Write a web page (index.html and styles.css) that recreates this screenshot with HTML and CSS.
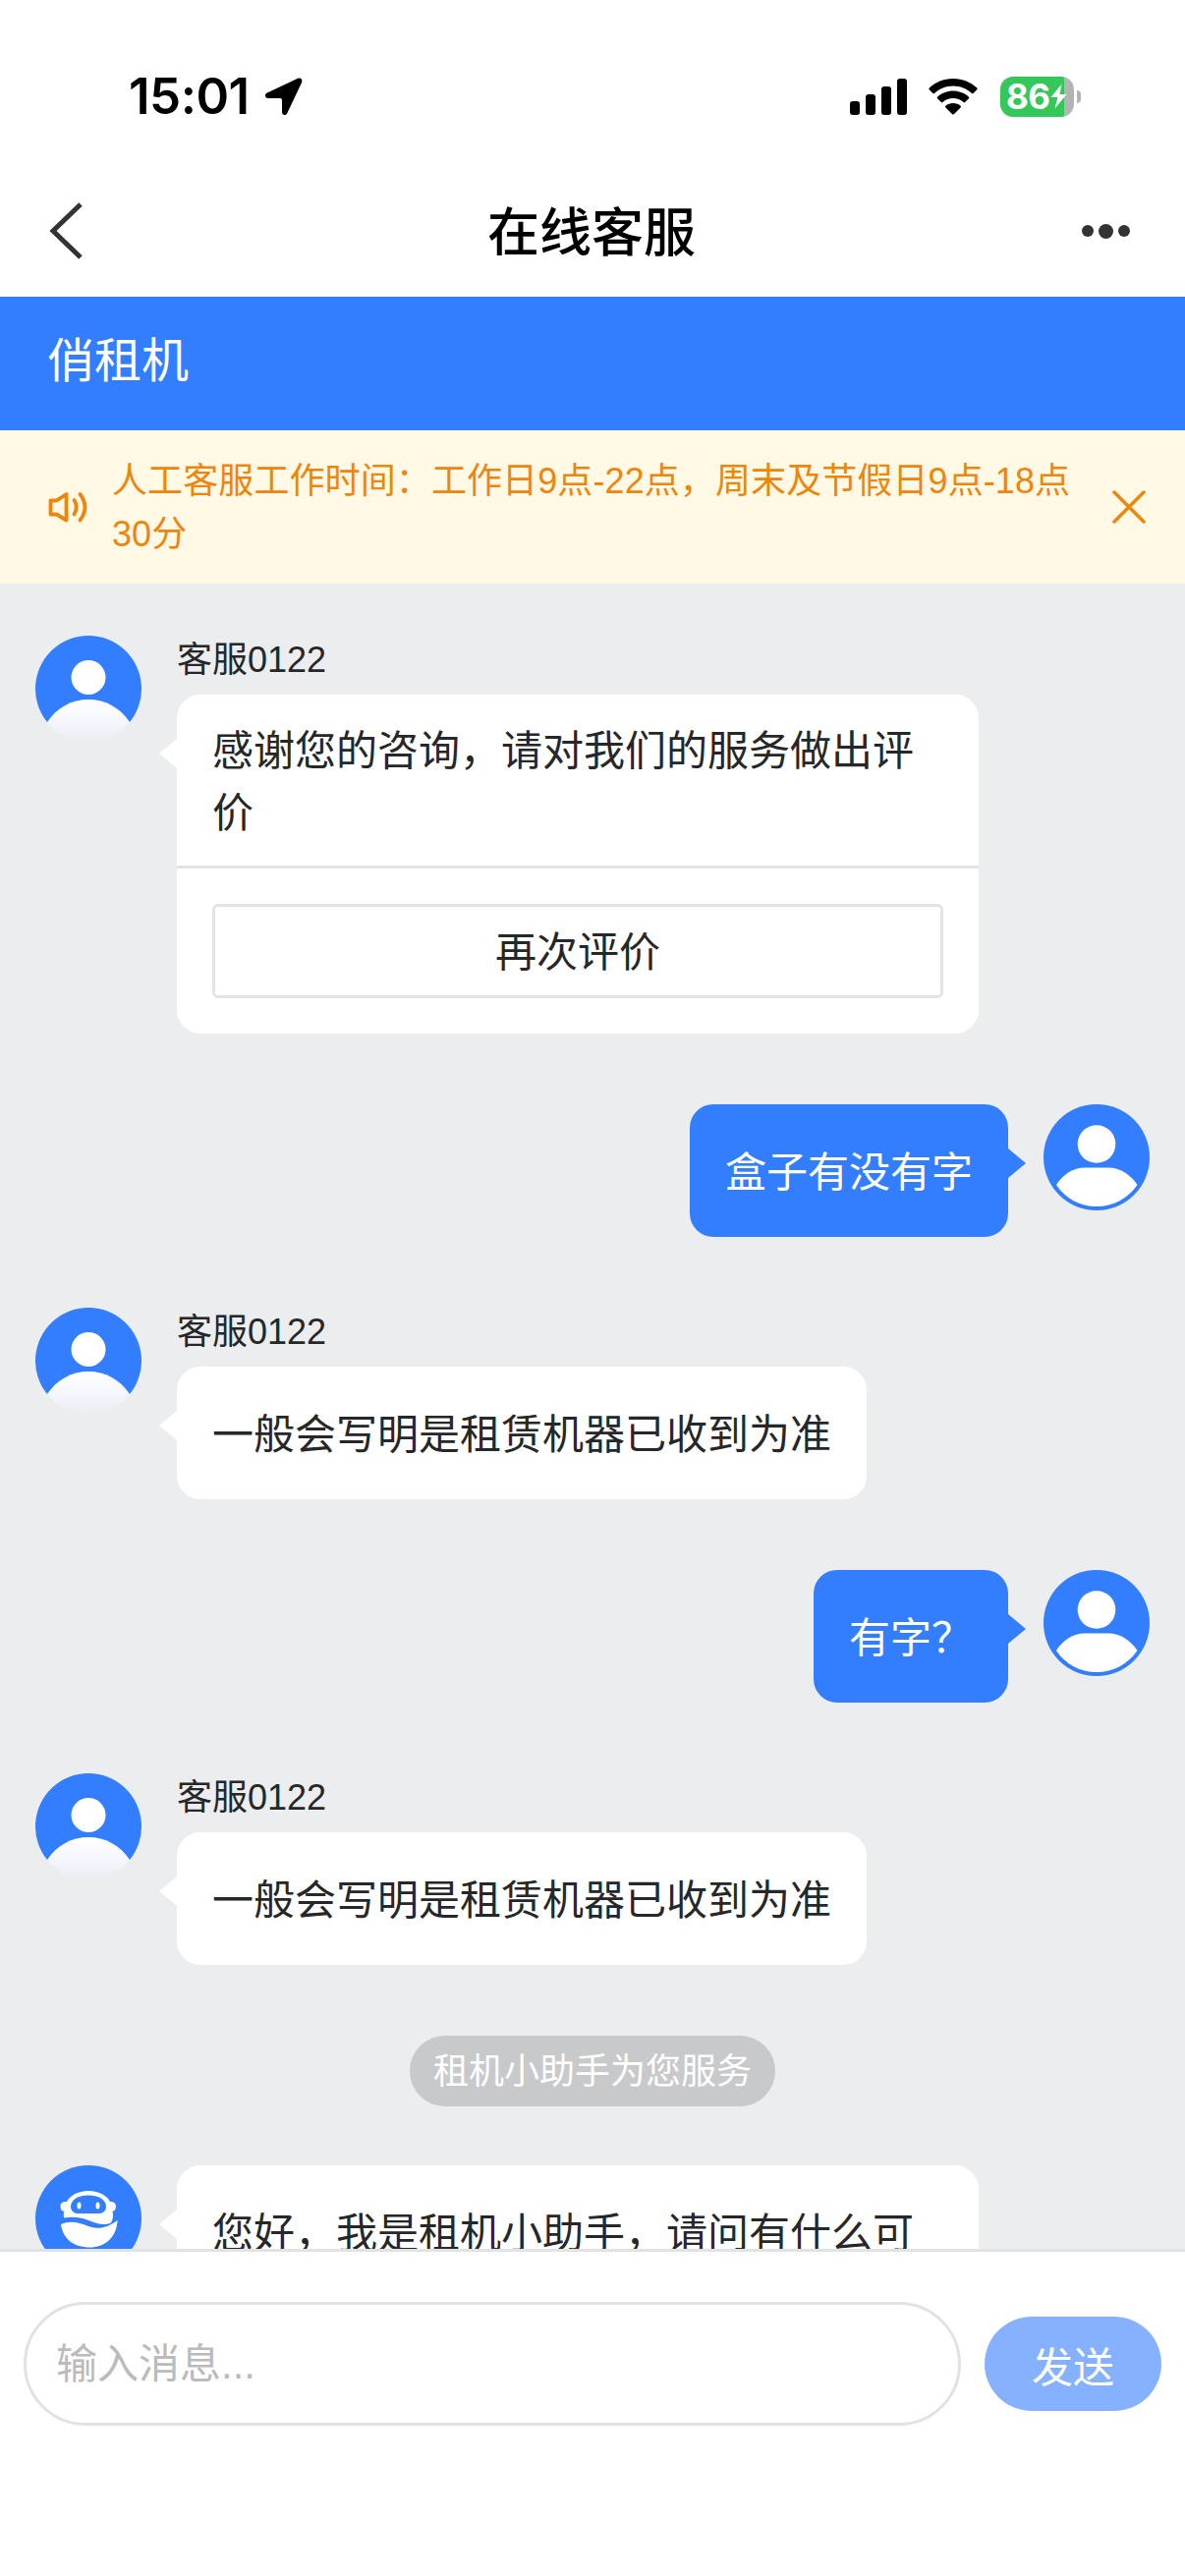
FILE: index.html
```html
<!DOCTYPE html>
<html lang="zh-CN">

<head>
    <meta charset="UTF-8" />
    <meta name="viewport" content="width=device-width, initial-scale=1.0" />
    <title>在线客服</title>
    <link rel="stylesheet" href="styles.css">
</head>

<body>
    <!-- 公用图标 -->
    <svg class="defs" width="0" height="0">
        <defs>
            <linearGradient id="fade" x1="0" y1="0" x2="0" y2="1">
                <stop offset="0" stop-color="#fff" />
                <stop offset="0.5" stop-color="#f5f7ff" />
                <stop offset="1" stop-color="#ebedf1" />
            </linearGradient>
            <clipPath id="round">
                <circle cx="54" cy="54" r="54" />
            </clipPath>
            <symbol id="staff" viewBox="0 0 108 108">
                <path d="M12 88A54 54 0 1 1 96 88Z" fill="#337eff" />
                <path d="M12 88C22 73 37 65 54 65S86 73 96 88V108H12Z" fill="url(#fade)" clip-path="url(#round)" />
                <circle cx="54" cy="42.500" r="17.500" fill="#fff" />
            </symbol>
            <symbol id="user" viewBox="0 0 108 108">
                <circle cx="54" cy="54" r="54" fill="#337eff" />
                <circle cx="54" cy="40.500" r="19.300" fill="#fff" />
                <path d="M13 82C20 71 30 64.500 42 64.500H66C78 64.500 88 71 95.500 82C86 96 71 104 54 104S22 96 13 82Z" fill="#fff" />
            </symbol>
        </defs>
    </svg>

    <div class="page">
        <div class="status">
            <div class="time">15:01</div>
            <svg class="location" viewBox="0 0 40 40">
                <path d="M35 0.800C38 -0.300 40.300 2 39 5L24 37C22.500 40.300 18.500 39.500 18.500 36V23.500Q18.500 21.500 16.500 21.500H4C0.500 21.500 -0.300 17.500 3 16Z" />
            </svg>
            <div class="signal">
                <i class="bar bar1"></i>
                <i class="bar bar2"></i>
                <i class="bar bar3"></i>
                <i class="bar bar4"></i>
            </div>
            <svg class="wifi" viewBox="0 0 50 37">
                <path d="M25 0C34.500 0 43 3.500 49.300 9.600Q50 10.500 49.300 11.300L45.500 15Q44.800 15.600 44 15C38.800 10.200 32.200 7.500 25 7.500S11.200 10.200 6 15Q5.200 15.600 4.500 15L0.700 11.300Q0 10.500 0.700 9.600C7 3.500 15.500 0 25 0Z" />
                <path d="M25 12.500C31.200 12.500 36.800 14.800 41 18.700Q41.700 19.500 41 20.300L37.100 24.100Q36.400 24.700 35.600 24.100C32.700 21.500 29 20 25 20S17.300 21.500 14.400 24.100Q13.600 24.700 12.900 24.100L9 20.300Q8.300 19.500 9 18.700C13.200 14.800 18.800 12.500 25 12.500Z" />
                <path d="M25 25C28 25 30.700 26 32.600 27.700Q33.400 28.500 32.600 29.400L25.800 36.200Q25 37 24.200 36.200L17.400 29.400Q16.600 28.500 17.400 27.700C19.300 26 22 25 25 25Z" />
            </svg>
            <div class="battery">
                <span class="level">86</span>
                <svg class="bolt" viewBox="0 0 17 26">
                    <path d="M11.500 0.500L0.500 14H7.500L4.500 25.500L16.500 11H9.500Z" />
                </svg>
            </div>
            <i class="nub"></i>
        </div>

        <div class="nav">
            <svg class="back" viewBox="0 0 34 58">
                <path d="M32 2L4 29L32 56" />
            </svg>
            <div class="title">在线客服</div>
            <div class="more">
                <i class="dot"></i>
                <i class="dot big"></i>
                <i class="dot"></i>
            </div>
        </div>

        <div class="shop">俏租机</div>

        <div class="notice">
            <svg class="speaker" viewBox="0 0 42 34">
                <path d="M3.500 10.500H9.500L19.500 4V30.500L9.500 24.500H3.500Z" />
                <path d="M27.500 10Q32 17.200 27.500 24.500" />
                <path d="M33.500 4Q43.500 17.200 33.500 30.500" />
            </svg>
            <div class="notice-text">人工客服工作时间：工作日9点-22点，周末及节假日9点-18点30分</div>
            <svg class="close" viewBox="0 0 34 34">
                <path d="M2 2L32 32M32 2L2 32" />
            </svg>
        </div>

        <div class="chat">
            <div class="msg">
                <svg class="avatar"><use href="#staff" /></svg>
                <div class="content">
                    <div class="name">客服0122</div>
                    <div class="bubble card">
                        <div class="card-text">感谢您的咨询，请对我们的服务做出评价</div>
                        <div class="card-foot">
                            <button class="again">再次评价</button>
                        </div>
                    </div>
                </div>
            </div>

            <div class="msg me">
                <div class="bubble">盒子有没有字</div>
                <svg class="avatar"><use href="#user" /></svg>
            </div>

            <div class="msg">
                <svg class="avatar"><use href="#staff" /></svg>
                <div class="content">
                    <div class="name">客服0122</div>
                    <div class="bubble">一般会写明是租赁机器已收到为准</div>
                </div>
            </div>

            <div class="msg me">
                <div class="bubble">有字？</div>
                <svg class="avatar"><use href="#user" /></svg>
            </div>

            <div class="msg">
                <svg class="avatar"><use href="#staff" /></svg>
                <div class="content">
                    <div class="name">客服0122</div>
                    <div class="bubble">一般会写明是租赁机器已收到为准</div>
                </div>
            </div>

            <div class="tip">租机小助手为您服务</div>

            <div class="msg">
                <svg class="avatar" viewBox="0 0 108 108">
                    <circle cx="54" cy="54" r="54" fill="#337eff" />
                    <path d="M54 26C65 26 73 31 76 37C80 36.500 82 39 82 42S80 47 78.500 46.500C79.500 51 79 55 77 58.500C69 62 62 59 54 56C46 53 38 52 29 53.500Q28.500 50 29 46.500C27 47 25.500 45 25.500 41.500S28 36.500 32 37C35 31 43 26 54 26Z" fill="#fff" />
                    <path d="M54 30.500C66 30.500 72 36 72 42C72 46 69 49 65 49H43C39 49 36 46 36 42C36 36 42 30.500 54 30.500Z" fill="#337eff" />
                    <ellipse cx="44.500" cy="41" rx="2" ry="3.500" fill="#fff" />
                    <ellipse cx="63.500" cy="41" rx="2" ry="3.500" fill="#fff" />
                    <path d="M26 60C35 56 44 58 54 62C65 66 74 63 83.500 56C83 72 72 83.500 55.500 83.500C39 83.500 28 75 26 60Z" fill="#fff" />
                </svg>
                <div class="bubble wide">您好，我是租机小助手，请问有什么可</div>
            </div>
        </div>

        <div class="footer">
            <input class="input" type="text" placeholder="输入消息..." />
            <button class="send">发送</button>
        </div>
    </div>
</body>

</html>
```
FILE: styles.css
```css
* {
    margin: 0;
    padding: 0;
    box-sizing: border-box;
}

body {
    font-family: "Liberation Sans", "Noto Sans CJK SC", sans-serif;
    font-size: 42px;
    color: #262728;
    background: #fff;
}

.defs {
    position: absolute;
}

.page {
    display: flex;
    flex-direction: column;
    width: 1206px;
    height: 2622px;
    overflow: hidden;
}

/* 状态栏 */
.status {
    display: flex;
    align-items: center;
    flex: none;
    height: 168px;
    padding: 28px 106px 0 131px;
}

.time {
    width: 138px;
    font-family: Inter, sans-serif;
    font-size: 51px;
    font-weight: 600;
    line-height: 60px;
    letter-spacing: -0.500px;
    color: #000;
}

.location {
    width: 39px;
    height: 39px;
    margin-right: auto;
}

.signal {
    display: flex;
    align-items: flex-end;
    gap: 6px;
    height: 37px;
}

.bar {
    width: 10px;
    border-radius: 3px;
    background: #000;
}

.bar1 {
    height: 14px;
}

.bar2 {
    height: 21px;
}

.bar3 {
    height: 29px;
}

.bar4 {
    height: 37px;
}

.wifi {
    width: 50px;
    height: 37px;
    margin: 0 23px 0 22px;
}

.battery {
    display: flex;
    align-items: center;
    width: 75px;
    height: 41px;
    padding-left: 6px;
    border-radius: 13px;
    background: linear-gradient(90deg, #34c759 65px, #b4b4b6 65px);
}

.level {
    font-family: Inter, sans-serif;
    font-size: 35px;
    font-weight: 700;
    line-height: 41px;
    letter-spacing: -0.500px;
    color: #fff;
}

.bolt {
    width: 17px;
    height: 26px;
    fill: #fff;
}

.nub {
    width: 4px;
    height: 13px;
    margin-left: 3px;
    border-radius: 0 4px 4px 0;
    background: #b4b4b6;
}

/* 导航栏 */
.nav {
    display: flex;
    align-items: center;
    justify-content: space-between;
    flex: none;
    height: 134px;
    padding: 0 56px 0 50px;
}

.back {
    width: 34px;
    height: 58px;
    margin-right: 19px;
    fill: none;
    stroke: #333;
    stroke-width: 5;
}

.title {
    padding-top: 5px;
    font-size: 53px;
    font-weight: 500;
    line-height: 60px;
    color: #000;
}

.more {
    display: flex;
    align-items: center;
    gap: 5px;
}

.dot {
    width: 12px;
    height: 12px;
    border-radius: 50%;
    background: #333;
}

.big {
    width: 15px;
    height: 15px;
}

.shop {
    flex: none;
    height: 136px;
    padding-left: 48px;
    font-size: 48px;
    line-height: 132px;
    color: #fff;
    background: #337eff;
}

/* 公告 */
.notice {
    display: flex;
    align-items: center;
    flex: none;
    height: 156px;
    padding: 0 40px 0 48px;
    color: #ed860c;
    background: #fff9e6;
}

.speaker {
    width: 42px;
    height: 34px;
    margin-right: 24px;
    fill: none;
    stroke: #ed860c;
    stroke-width: 3.800;
    stroke-linejoin: round;
    stroke-linecap: round;
}

.notice-text {
    flex: 1;
    padding-top: 2px;
    font-size: 36px;
    line-height: 54px;
    letter-spacing: 0.100px;
}

.close {
    width: 34px;
    height: 34px;
    margin-left: 34px;
    fill: none;
    stroke: #ed860c;
    stroke-width: 3.500;
    stroke-linecap: round;
}

/* 聊天记录 */
.chat {
    flex: 1;
    padding: 53px 36px 0;
    overflow: hidden;
    background: #ebedef;
}

.msg {
    display: flex;
    align-items: flex-start;
    gap: 36px;
    margin-bottom: 72px;
}

.me {
    justify-content: flex-end;
}

.avatar {
    flex: none;
    width: 108px;
    height: 108px;
}

.name {
    height: 60px;
    font-size: 36px;
    line-height: 49px;
}

.bubble {
    position: relative;
    width: fit-content;
    max-width: 816px;
    padding: 38px 36px 34px;
    border-radius: 24px;
    line-height: 63px;
    background: #fff;
}

.bubble::before {
    content: "";
    position: absolute;
    top: 45px;
    left: -18px;
    border: 15px solid transparent;
    border-left: 0;
    border-right: 18px solid #fff;
}

.me .bubble {
    color: #fff;
    background: #337eff;
}

.me .bubble::before {
    left: auto;
    right: -18px;
    border-right: 0;
    border-left: 18px solid #337eff;
}

.wide {
    width: 816px;
}

.card {
    width: 816px;
    padding: 0;
}

.card-text {
    padding: 26px 36px 22px;
}

.card-foot {
    padding: 36px;
    border-top: 3px solid #e1e3e4;
}

.again {
    display: block;
    width: 100%;
    height: 96px;
    padding-top: 3px;
    font: inherit;
    color: inherit;
    border: 3px solid #e1e3e4;
    border-radius: 6px;
    background: #fff;
}

.tip {
    width: fit-content;
    height: 72px;
    margin: 0 auto 60px;
    padding: 0 24px;
    font-size: 36px;
    line-height: 74px;
    border-radius: 36px;
    color: #fff;
    background: #c8c9cb;
}

/* 输入区 */
.footer {
    display: flex;
    align-items: center;
    gap: 24px;
    flex: none;
    height: 333px;
    padding: 0 24px 102px;
    border-top: 3px solid #e1e2e3;
    background: #fff;
}

.input {
    flex: 1;
    min-width: 0;
    height: 126px;
    padding: 2px 30px 0;
    font: inherit;
    border: 3px solid #e1e2e3;
    border-radius: 63px;
    outline: none;
}

.input::placeholder {
    color: #bbb;
}

.send {
    width: 180px;
    height: 96px;
    font: inherit;
    color: #fff;
    border: none;
    border-radius: 48px;
    background: #85b1ff;
}
```
